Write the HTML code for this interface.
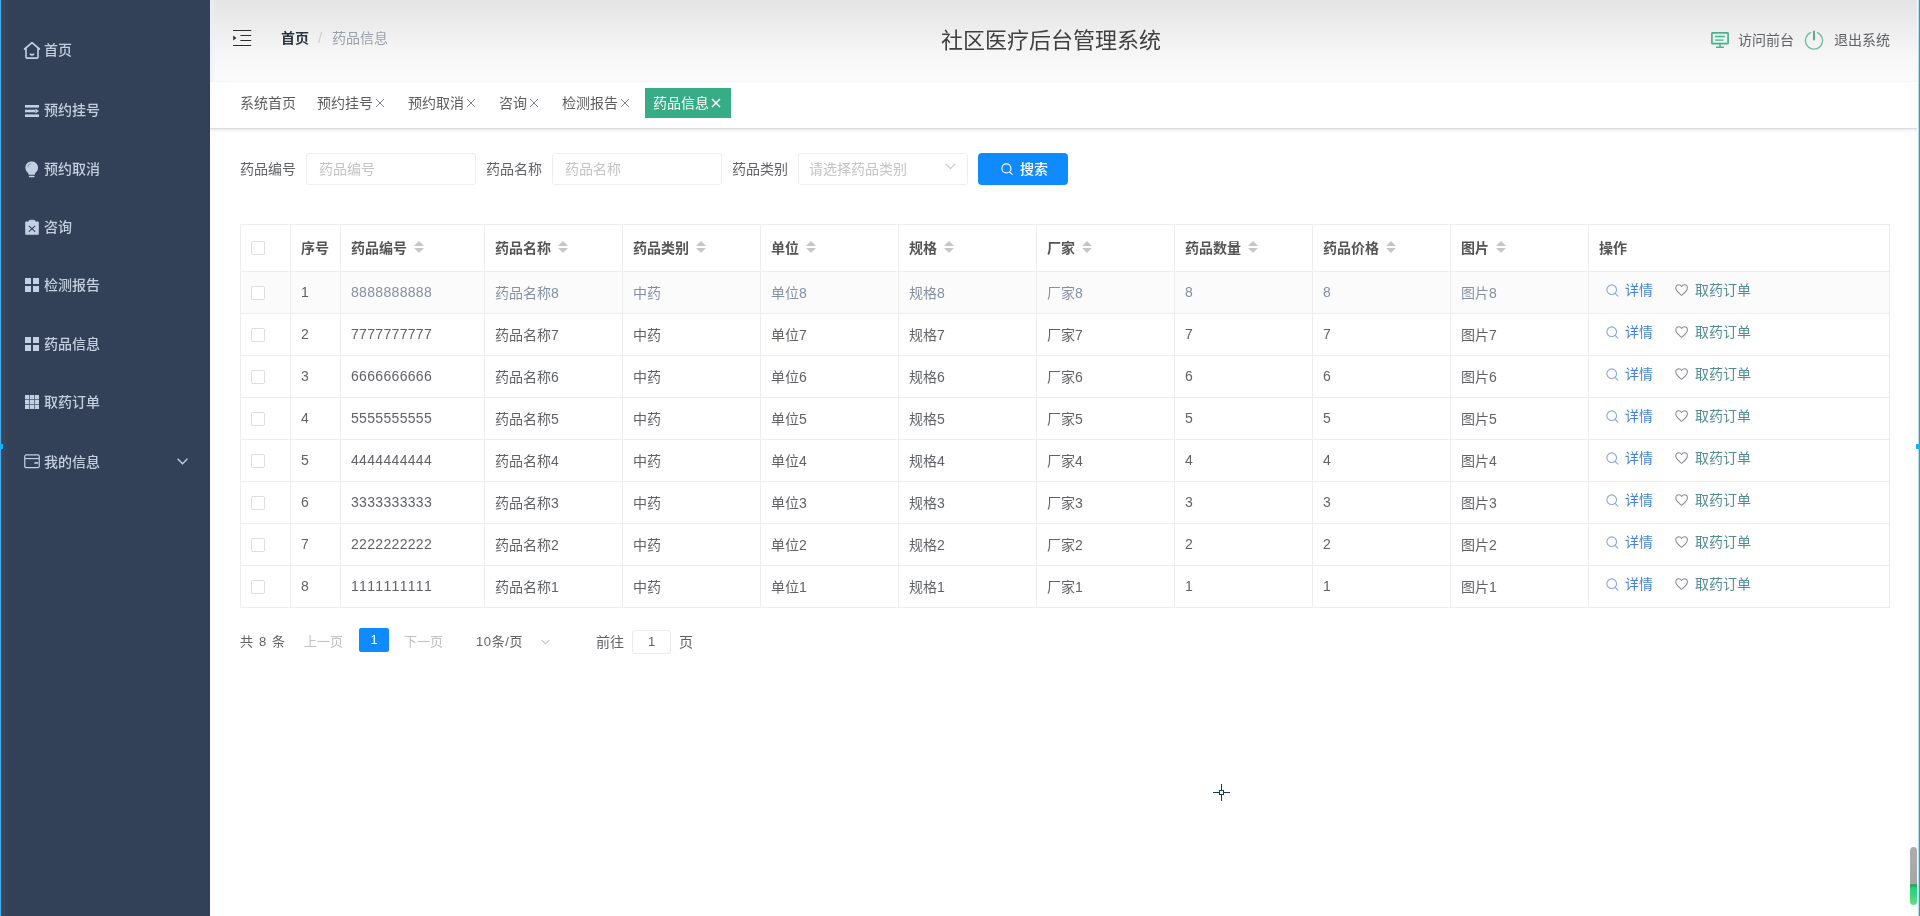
<!DOCTYPE html>
<html lang="zh-CN">
<head>
<meta charset="utf-8">
<title>社区医疗后台管理系统</title>
<style>
*{box-sizing:border-box;margin:0;padding:0}
html,body{width:1920px;height:916px;overflow:hidden;background:#fff}
body{position:relative;will-change:transform;font-family:"Liberation Sans","Noto Sans CJK SC",sans-serif;font-size:14px;color:#606266;-webkit-font-smoothing:antialiased}
.abs{position:absolute}
svg{display:block;overflow:visible}
/* ---- sidebar ---- */
.side{position:absolute;left:0;top:0;width:210px;height:916px;background:#334158}
.side .edge{position:absolute;left:0;top:0;width:2px;height:916px;background:linear-gradient(90deg,#4aa6e4 0,#4aa6e4 1px,#0f5c9c 1px,#0f5c9c 2px)}
.side .edge2{position:absolute;left:2px;top:0;width:7px;height:916px;background:linear-gradient(90deg,#38485b,#334158)}
.side .nub{position:absolute;left:0;top:444px;width:3px;height:5px;background:#1cb0f6}
.mi{position:absolute;left:0;width:210px;height:20px;line-height:20px;color:#c3cfde;font-size:14px;font-weight:500;white-space:nowrap}
.mi .t{position:absolute;left:44px;top:0}
.mi svg{position:absolute}
/* ---- header ---- */
.head{position:absolute;left:210px;top:0;width:1710px;height:82px;background:linear-gradient(180deg,#e4e4e4 0%,#ececec 30%,#f6f6f6 65%,#fbfbfb 100%)}
.bc{position:absolute;top:28px;height:20px;line-height:20px;font-size:14px;white-space:nowrap}
.title{position:absolute;left:731px;top:25px;width:220px;height:32px;line-height:32px;font-size:22px;color:#404040;white-space:nowrap;text-align:center}
.hr{position:absolute;top:30px;height:20px;line-height:20px;font-size:14px;color:#606266;white-space:nowrap}
/* ---- tabs ---- */
.tabs{position:absolute;left:210px;top:82px;width:1710px;height:47px;background:#fff;border-bottom:1px solid #dcdcdc;box-shadow:0 1px 3px 0 rgba(0,0,0,.12)}
.tab{position:absolute;top:11px;height:20px;line-height:20px;font-size:14px;color:#5c5c5c;white-space:nowrap}
.tab .x{position:absolute;top:5px}
.tab.on{top:6px;height:30px;line-height:30px;background:#37ad85;color:#fff}
/* ---- form ---- */
.lbl{position:absolute;top:159px;height:20px;line-height:20px;font-size:14px;color:#606266;white-space:nowrap}
.inp{position:absolute;top:153px;height:32px;width:170px;border:1px solid #eeeeee;border-radius:3px;background:#fff;font-size:14px;color:#c4c4c4;line-height:30px;padding-left:12px;white-space:nowrap}
.btn{position:absolute;left:978px;top:153px;width:90px;height:32px;border-radius:4px;background:#108bff;color:#fff;font-size:14px;font-weight:500;line-height:32px;white-space:nowrap}
/* ---- table ---- */
.tbl{position:absolute;left:240px;top:224px;width:1650px;border-collapse:separate;border-spacing:0;table-layout:fixed;border-top:1px solid #ededed;border-left:1px solid #ededed;font-size:14px;color:#606266}
.tbl th,.tbl td{border-right:1px solid #ededed;border-bottom:1px solid #ededed;padding:0 0 0 10px;text-align:left;white-space:nowrap;overflow:hidden;vertical-align:middle;position:relative}
.tbl th{height:47px;font-weight:bold;color:#555;padding-bottom:2px}
.tbl td{height:42px;font-weight:normal;padding-bottom:2px}
.tbl td .cb{position:relative;top:1px}
.tbl tr.hov td{background:#fbfbfb;color:#8590a3}
.tbl tr.hov td.n{color:#606266}
.cb{display:block;width:14px;height:14px;border:1px solid #dedede;border-radius:2px;background:#fff;margin-left:0}
.tbl th .cb{position:relative;top:1px}
.sort{display:inline-block;position:relative;width:10px;height:12px;margin-left:7px;vertical-align:0px}
.sort:before,.sort:after{content:"";position:absolute;left:0;border:5px solid transparent}
.sort:before{top:-5px;border-bottom-color:#c5c6c9}
.sort:after{top:7px;border-top-color:#c5c6c9}
.num{letter-spacing:.32px;font-kerning:none;font-variant-numeric:tabular-nums}
.act{position:absolute;top:8px;height:20px;line-height:20px;font-size:14px;white-space:nowrap}
.a1{left:36px;color:#4583d6}
.a2{left:106px;color:#528d94}
.act svg{position:absolute}
/* ---- pagination ---- */
.pg{position:absolute;top:632px;height:20px;line-height:20px;font-size:13px;color:#606266;white-space:nowrap}
.pgb{position:absolute;left:359px;top:628px;width:30px;height:24px;border-radius:2px;background:#108bff;color:#fff;font-size:13px;font-weight:normal;line-height:24px;text-align:center}
.pgi{position:absolute;left:632px;top:630px;width:39px;height:24px;border:1px solid #ececec;border-radius:3px;font-size:13px;line-height:22px;text-align:center;color:#606266}
</style>
</head>
<body>
<div class="side"><div class="edge"></div><div class="edge2"></div><div class="nub"></div>
<div class="mi" style="top:40px"><svg style="left:23px;top:1px" width="18" height="19" viewBox="0 0 18 18" preserveAspectRatio="none" fill="none" stroke="#c3d0e4" stroke-width="1.6" stroke-linejoin="round" stroke-linecap="round"><path d="M1.6 7.6 L9 1.6 L16.4 7.6 M3 6.8 V15.2 Q3 16.2 4 16.2 H14 Q15 16.2 15 15.2 V6.8"/><path d="M7.4 12.6 Q9 13.6 10.6 12.6"/></svg><span class="t">首页</span></div>
<div class="mi" style="top:100px"><svg style="left:25px;top:5px" width="14" height="12" viewBox="0 0 14 12" fill="#c3d0e4"><rect x="0" y="0" width="14" height="2.6"/><rect x="0" y="4.7" width="10" height="2.6"/><path d="M10.4 3.6 L14 6 L10.4 8.4 Z"/><rect x="0" y="9.4" width="14" height="2.6"/></svg><span class="t">预约挂号</span></div>
<div class="mi" style="top:159px"><svg style="left:25px;top:1.6px" width="13.4" height="17.6" viewBox="0 0 14 18" preserveAspectRatio="none" fill="#c3d0e4"><path d="M7 0.5 C3.2 0.5 0.4 3.3 0.4 6.8 C0.4 9.2 1.7 10.6 2.8 11.8 C3.4 12.5 3.7 13.2 3.8 14 H10.2 C10.3 13.2 10.6 12.5 11.2 11.8 C12.3 10.6 13.6 9.2 13.6 6.8 C13.6 3.3 10.8 0.5 7 0.5 Z"/><rect x="4" y="15" width="6" height="1.7" rx=".8"/><path d="M3 6.4 C3 4.4 4.4 3 6.2 2.8" stroke="#334158" stroke-width=".9" fill="none" opacity=".55"/></svg><span class="t">预约取消</span></div>
<div class="mi" style="top:217px"><svg style="left:25px;top:3px" width="14" height="15.3" viewBox="0 0 14 17" preserveAspectRatio="none" fill="#c3d0e4"><rect x="0.2" y="1.8" width="13.6" height="14.6" rx=".8"/><rect x="4" y="0.3" width="6" height="2.6" rx="1" stroke="#c3d0e4" stroke-width="1"/><path d="M3.9 6.6 L10.1 12.9 M10.1 6.6 L3.9 12.9" stroke="#334158" stroke-width="1.1" fill="none"/></svg><span class="t">咨询</span></div>
<div class="mi" style="top:275px"><svg style="left:25px;top:3px" width="14" height="14" viewBox="0 0 14 14" fill="#c3d0e4"><rect x="0" y="0" width="6" height="6"/><rect x="8" y="0" width="6" height="6"/><rect x="0" y="8" width="6" height="6"/><rect x="8" y="8" width="6" height="6"/></svg><span class="t">检测报告</span></div>
<div class="mi" style="top:333.5px"><svg style="left:25px;top:3px" width="14" height="14" viewBox="0 0 14 14" fill="#c3d0e4"><rect x="0" y="0" width="6" height="6"/><rect x="8" y="0" width="6" height="6"/><rect x="0" y="8" width="6" height="6"/><rect x="8" y="8" width="6" height="6"/></svg><span class="t">药品信息</span></div>
<div class="mi" style="top:392px"><svg style="left:25px;top:3px" width="14" height="14" viewBox="0 0 14 14" fill="#c3d0e4"><rect x="0" y="0" width="14" height="14"/><path d="M4.5 0 V14 M9.5 0 V14 M0 4.5 H14 M0 9.5 H14" stroke="#334158" stroke-width=".8" opacity=".8"/></svg><span class="t">取药订单</span></div>
<div class="mi" style="top:451px"><svg style="left:24px;top:3px" width="16" height="14.6" viewBox="0 0 17 16" preserveAspectRatio="none" fill="none" stroke="#c3d0e4" stroke-width="1.3"><rect x=".8" y="1" width="15.4" height="14" rx="1.6"/><path d="M1 5 H16"/><path d="M11 9.8 H15" stroke-width="1.8"/></svg><span class="t" style="top:1px">我的信息</span><svg style="left:177px;top:7px" width="11" height="7" viewBox="0 0 11 7" fill="none" stroke="#c3d0e4" stroke-width="1.3"><path d="M.6 .8 L5.5 5.8 L10.4 .8"/></svg></div>
</div>
<div class="head">
<div class="abs" style="left:0;top:0;width:6px;height:82px;background:linear-gradient(90deg,rgba(236,240,250,.9),rgba(240,243,250,0))"></div>
<svg class="abs" style="left:23px;top:30px" width="19" height="16" viewBox="0 0 19 16"><path d="M0 .5 H18.2 M7.4 5.5 H18.2 M7.4 10.5 H18.2 M0 15.5 H18.2" stroke="#2e2e2e" stroke-width="1.1" fill="none"/><path d="M.2 5.4 L3.4 8 L.2 10.6 Z" fill="#2e2e2e"/></svg>
<span class="bc" style="left:71px;color:#2b3340;font-weight:bold">首页</span>
<span class="bc" style="left:108px;color:#cfcfcf;font-weight:normal;font-size:15px">/</span>
<span class="bc" style="left:122px;color:#9aa1ab">药品信息</span>
<div class="title">社区医疗后台管理系统</div>
<svg class="abs" style="left:1501px;top:32px" width="18" height="16.2" viewBox="0 0 20 18" fill="none" stroke="#4fae8e" stroke-width="1.9"><rect x="1" y="1" width="18" height="12" rx=".6" fill="#dff5ec"/><path d="M4.6 5 H15.4 M4.6 9 H13.6" stroke-width="1.5"/><path d="M10 13 V16.6 M5.6 17 H14.4" stroke-width="1.7"/></svg>
<span class="hr" style="left:1528px">访问前台</span>
<svg class="abs" style="left:1594px;top:30px" width="20" height="20" viewBox="0 0 20 20" fill="none" stroke="#74bfa5" stroke-width="1.3" stroke-linecap="round"><path d="M6.6 2.6 A8.6 8.6 0 1 0 13.4 2.6"/><path d="M10 1.4 V9.6" stroke="#4fa98a" stroke-width="1.9"/></svg>
<span class="hr" style="left:1624px">退出系统</span>
</div>
<div class="tabs">
<div class="tab" style="left:30px">系统首页</div>
<div class="tab" style="left:107px">预约挂号<svg class="x" style="left:58px" width="10" height="10" viewBox="0 0 10 10"><path d="M1 1 L9 9 M9 1 L1 9" stroke="#7d8590" stroke-width="1" fill="none"/></svg></div>
<div class="tab" style="left:198px">预约取消<svg class="x" style="left:58px" width="10" height="10" viewBox="0 0 10 10"><path d="M1 1 L9 9 M9 1 L1 9" stroke="#7d8590" stroke-width="1" fill="none"/></svg></div>
<div class="tab" style="left:289px">咨询<svg class="x" style="left:30px" width="10" height="10" viewBox="0 0 10 10"><path d="M1 1 L9 9 M9 1 L1 9" stroke="#7d8590" stroke-width="1" fill="none"/></svg></div>
<div class="tab" style="left:352px">检测报告<svg class="x" style="left:58px" width="10" height="10" viewBox="0 0 10 10"><path d="M1 1 L9 9 M9 1 L1 9" stroke="#7d8590" stroke-width="1" fill="none"/></svg></div>
<div class="tab on" style="left:435px;width:86px;padding-left:8px">药品信息<svg class="x"  style="top:10px;left:66px" width="10" height="10" viewBox="0 0 10 10"><path d="M1 1 L9 9 M9 1 L1 9" stroke="#fff" stroke-width="1.5" fill="none"/></svg></div>
</div>
<span class="lbl" style="left:240px">药品编号</span><div class="inp" style="left:306px">药品编号</div>
<span class="lbl" style="left:486px">药品名称</span><div class="inp" style="left:552px">药品名称</div>
<span class="lbl" style="left:732px">药品类别</span><div class="inp" style="left:798px;padding-left:10px">请选择药品类别<svg class="abs" style="left:146px;top:9px" width="11" height="7" viewBox="0 0 11 7" fill="none" stroke="#c0c4cc" stroke-width="1.1"><path d="M.6 .8 L5.5 5.6 L10.4 .8"/></svg></div>
<div class="btn"><svg class="abs" style="left:23px;top:10px" width="12.2" height="12.2" viewBox="0 0 14 14" fill="none" stroke="#fff" stroke-width="1.3" stroke-linecap="round"><circle cx="6.2" cy="6.2" r="5.2"/><path d="M10.2 10.4 L12.8 13"/></svg><span class="abs" style="left:42px;top:0">搜索</span></div>
<table class="tbl"><colgroup>
<col style="width:50px">
<col style="width:50px">
<col style="width:144px">
<col style="width:138px">
<col style="width:138px">
<col style="width:138px">
<col style="width:138px">
<col style="width:138px">
<col style="width:138px">
<col style="width:138px">
<col style="width:138px">
<col style="width:301px">
</colgroup><thead><tr>
<th><span class="cb"></span></th>
<th>序号</th>
<th>药品编号<span class="sort"></span></th>
<th>药品名称<span class="sort"></span></th>
<th>药品类别<span class="sort"></span></th>
<th>单位<span class="sort"></span></th>
<th>规格<span class="sort"></span></th>
<th>厂家<span class="sort"></span></th>
<th>药品数量<span class="sort"></span></th>
<th>药品价格<span class="sort"></span></th>
<th>图片<span class="sort"></span></th>
<th>操作</th>
</tr></thead><tbody>
<tr class="hov"><td><span class="cb"></span></td><td class="n"><span class="num">1</span></td><td><span class="num">8888888888</span></td><td>药品名称<span class="num">8</span></td><td>中药</td><td>单位<span class="num">8</span></td><td>规格<span class="num">8</span></td><td>厂家<span class="num">8</span></td><td><span class="num">8</span></td><td><span class="num">8</span></td><td>图片<span class="num">8</span></td><td><span class="act a1"><svg style="left:-19.5px;top:3.5px" width="12.8" height="12.8" viewBox="0 0 13 13" fill="none" stroke="#8aa4e8" stroke-width="1.1" stroke-linecap="round"><circle cx="5.8" cy="5.8" r="4.9"/><path d="M9.5 9.7 L12 12.2"/></svg>详情</span><span class="act a2"><svg style="left:-20px;top:3.5px" width="13.2" height="12.2" viewBox="0 0 14 13" fill="none" stroke="#858a91" stroke-width="1.1" stroke-linejoin="round"><path d="M7 12 C4.5 10 .8 7.6 .8 4.3 C.8 2.3 2.3 .9 4 .9 C5.3 .9 6.4 1.6 7 2.8 C7.6 1.6 8.7 .9 10 .9 C11.7 .9 13.2 2.3 13.2 4.3 C13.2 7.6 9.5 10 7 12 Z"/></svg>取药订单</span></td></tr>
<tr><td><span class="cb"></span></td><td class="n"><span class="num">2</span></td><td><span class="num">7777777777</span></td><td>药品名称<span class="num">7</span></td><td>中药</td><td>单位<span class="num">7</span></td><td>规格<span class="num">7</span></td><td>厂家<span class="num">7</span></td><td><span class="num">7</span></td><td><span class="num">7</span></td><td>图片<span class="num">7</span></td><td><span class="act a1"><svg style="left:-19.5px;top:3.5px" width="12.8" height="12.8" viewBox="0 0 13 13" fill="none" stroke="#8aa4e8" stroke-width="1.1" stroke-linecap="round"><circle cx="5.8" cy="5.8" r="4.9"/><path d="M9.5 9.7 L12 12.2"/></svg>详情</span><span class="act a2"><svg style="left:-20px;top:3.5px" width="13.2" height="12.2" viewBox="0 0 14 13" fill="none" stroke="#858a91" stroke-width="1.1" stroke-linejoin="round"><path d="M7 12 C4.5 10 .8 7.6 .8 4.3 C.8 2.3 2.3 .9 4 .9 C5.3 .9 6.4 1.6 7 2.8 C7.6 1.6 8.7 .9 10 .9 C11.7 .9 13.2 2.3 13.2 4.3 C13.2 7.6 9.5 10 7 12 Z"/></svg>取药订单</span></td></tr>
<tr><td><span class="cb"></span></td><td class="n"><span class="num">3</span></td><td><span class="num">6666666666</span></td><td>药品名称<span class="num">6</span></td><td>中药</td><td>单位<span class="num">6</span></td><td>规格<span class="num">6</span></td><td>厂家<span class="num">6</span></td><td><span class="num">6</span></td><td><span class="num">6</span></td><td>图片<span class="num">6</span></td><td><span class="act a1"><svg style="left:-19.5px;top:3.5px" width="12.8" height="12.8" viewBox="0 0 13 13" fill="none" stroke="#8aa4e8" stroke-width="1.1" stroke-linecap="round"><circle cx="5.8" cy="5.8" r="4.9"/><path d="M9.5 9.7 L12 12.2"/></svg>详情</span><span class="act a2"><svg style="left:-20px;top:3.5px" width="13.2" height="12.2" viewBox="0 0 14 13" fill="none" stroke="#858a91" stroke-width="1.1" stroke-linejoin="round"><path d="M7 12 C4.5 10 .8 7.6 .8 4.3 C.8 2.3 2.3 .9 4 .9 C5.3 .9 6.4 1.6 7 2.8 C7.6 1.6 8.7 .9 10 .9 C11.7 .9 13.2 2.3 13.2 4.3 C13.2 7.6 9.5 10 7 12 Z"/></svg>取药订单</span></td></tr>
<tr><td><span class="cb"></span></td><td class="n"><span class="num">4</span></td><td><span class="num">5555555555</span></td><td>药品名称<span class="num">5</span></td><td>中药</td><td>单位<span class="num">5</span></td><td>规格<span class="num">5</span></td><td>厂家<span class="num">5</span></td><td><span class="num">5</span></td><td><span class="num">5</span></td><td>图片<span class="num">5</span></td><td><span class="act a1"><svg style="left:-19.5px;top:3.5px" width="12.8" height="12.8" viewBox="0 0 13 13" fill="none" stroke="#8aa4e8" stroke-width="1.1" stroke-linecap="round"><circle cx="5.8" cy="5.8" r="4.9"/><path d="M9.5 9.7 L12 12.2"/></svg>详情</span><span class="act a2"><svg style="left:-20px;top:3.5px" width="13.2" height="12.2" viewBox="0 0 14 13" fill="none" stroke="#858a91" stroke-width="1.1" stroke-linejoin="round"><path d="M7 12 C4.5 10 .8 7.6 .8 4.3 C.8 2.3 2.3 .9 4 .9 C5.3 .9 6.4 1.6 7 2.8 C7.6 1.6 8.7 .9 10 .9 C11.7 .9 13.2 2.3 13.2 4.3 C13.2 7.6 9.5 10 7 12 Z"/></svg>取药订单</span></td></tr>
<tr><td><span class="cb"></span></td><td class="n"><span class="num">5</span></td><td><span class="num">4444444444</span></td><td>药品名称<span class="num">4</span></td><td>中药</td><td>单位<span class="num">4</span></td><td>规格<span class="num">4</span></td><td>厂家<span class="num">4</span></td><td><span class="num">4</span></td><td><span class="num">4</span></td><td>图片<span class="num">4</span></td><td><span class="act a1"><svg style="left:-19.5px;top:3.5px" width="12.8" height="12.8" viewBox="0 0 13 13" fill="none" stroke="#8aa4e8" stroke-width="1.1" stroke-linecap="round"><circle cx="5.8" cy="5.8" r="4.9"/><path d="M9.5 9.7 L12 12.2"/></svg>详情</span><span class="act a2"><svg style="left:-20px;top:3.5px" width="13.2" height="12.2" viewBox="0 0 14 13" fill="none" stroke="#858a91" stroke-width="1.1" stroke-linejoin="round"><path d="M7 12 C4.5 10 .8 7.6 .8 4.3 C.8 2.3 2.3 .9 4 .9 C5.3 .9 6.4 1.6 7 2.8 C7.6 1.6 8.7 .9 10 .9 C11.7 .9 13.2 2.3 13.2 4.3 C13.2 7.6 9.5 10 7 12 Z"/></svg>取药订单</span></td></tr>
<tr><td><span class="cb"></span></td><td class="n"><span class="num">6</span></td><td><span class="num">3333333333</span></td><td>药品名称<span class="num">3</span></td><td>中药</td><td>单位<span class="num">3</span></td><td>规格<span class="num">3</span></td><td>厂家<span class="num">3</span></td><td><span class="num">3</span></td><td><span class="num">3</span></td><td>图片<span class="num">3</span></td><td><span class="act a1"><svg style="left:-19.5px;top:3.5px" width="12.8" height="12.8" viewBox="0 0 13 13" fill="none" stroke="#8aa4e8" stroke-width="1.1" stroke-linecap="round"><circle cx="5.8" cy="5.8" r="4.9"/><path d="M9.5 9.7 L12 12.2"/></svg>详情</span><span class="act a2"><svg style="left:-20px;top:3.5px" width="13.2" height="12.2" viewBox="0 0 14 13" fill="none" stroke="#858a91" stroke-width="1.1" stroke-linejoin="round"><path d="M7 12 C4.5 10 .8 7.6 .8 4.3 C.8 2.3 2.3 .9 4 .9 C5.3 .9 6.4 1.6 7 2.8 C7.6 1.6 8.7 .9 10 .9 C11.7 .9 13.2 2.3 13.2 4.3 C13.2 7.6 9.5 10 7 12 Z"/></svg>取药订单</span></td></tr>
<tr><td><span class="cb"></span></td><td class="n"><span class="num">7</span></td><td><span class="num">2222222222</span></td><td>药品名称<span class="num">2</span></td><td>中药</td><td>单位<span class="num">2</span></td><td>规格<span class="num">2</span></td><td>厂家<span class="num">2</span></td><td><span class="num">2</span></td><td><span class="num">2</span></td><td>图片<span class="num">2</span></td><td><span class="act a1"><svg style="left:-19.5px;top:3.5px" width="12.8" height="12.8" viewBox="0 0 13 13" fill="none" stroke="#8aa4e8" stroke-width="1.1" stroke-linecap="round"><circle cx="5.8" cy="5.8" r="4.9"/><path d="M9.5 9.7 L12 12.2"/></svg>详情</span><span class="act a2"><svg style="left:-20px;top:3.5px" width="13.2" height="12.2" viewBox="0 0 14 13" fill="none" stroke="#858a91" stroke-width="1.1" stroke-linejoin="round"><path d="M7 12 C4.5 10 .8 7.6 .8 4.3 C.8 2.3 2.3 .9 4 .9 C5.3 .9 6.4 1.6 7 2.8 C7.6 1.6 8.7 .9 10 .9 C11.7 .9 13.2 2.3 13.2 4.3 C13.2 7.6 9.5 10 7 12 Z"/></svg>取药订单</span></td></tr>
<tr><td><span class="cb"></span></td><td class="n"><span class="num">8</span></td><td><span class="num">1111111111</span></td><td>药品名称<span class="num">1</span></td><td>中药</td><td>单位<span class="num">1</span></td><td>规格<span class="num">1</span></td><td>厂家<span class="num">1</span></td><td><span class="num">1</span></td><td><span class="num">1</span></td><td>图片<span class="num">1</span></td><td><span class="act a1"><svg style="left:-19.5px;top:3.5px" width="12.8" height="12.8" viewBox="0 0 13 13" fill="none" stroke="#8aa4e8" stroke-width="1.1" stroke-linecap="round"><circle cx="5.8" cy="5.8" r="4.9"/><path d="M9.5 9.7 L12 12.2"/></svg>详情</span><span class="act a2"><svg style="left:-20px;top:3.5px" width="13.2" height="12.2" viewBox="0 0 14 13" fill="none" stroke="#858a91" stroke-width="1.1" stroke-linejoin="round"><path d="M7 12 C4.5 10 .8 7.6 .8 4.3 C.8 2.3 2.3 .9 4 .9 C5.3 .9 6.4 1.6 7 2.8 C7.6 1.6 8.7 .9 10 .9 C11.7 .9 13.2 2.3 13.2 4.3 C13.2 7.6 9.5 10 7 12 Z"/></svg>取药订单</span></td></tr>
</tbody></table>
<span class="pg" style="left:240px;word-spacing:2.3px">共 8 条</span>
<span class="pg" style="left:304px;color:#bfc1c6">上一页</span>
<div class="pgb">1</div>
<span class="pg" style="left:404px;color:#bfc1c6">下一页</span>
<span class="pg" style="left:476px;letter-spacing:.6px">10条/页</span>
<svg class="abs" style="left:541px;top:639px" width="9" height="6" viewBox="0 0 9 6" fill="none" stroke="#c0c4cc" stroke-width="1.1"><path d="M.6 .8 L4.5 4.8 L8.4 .8"/></svg>
<span class="pg" style="left:596px;font-size:14px">前往</span>
<div class="pgi">1</div>
<span class="pg" style="left:679px;font-size:14px">页</span>
<div class="abs" style="left:1221px;top:784px;width:1px;height:17px;background:#0f3d55"></div><div class="abs" style="left:1213px;top:792px;width:17px;height:1px;background:#0f3d55"></div><div class="abs" style="left:1219px;top:790px;width:5px;height:5px;border:1px solid #0f3d55;background:#fff"></div>
<div class="abs" style="left:1917px;top:0;width:3px;height:916px;background:linear-gradient(90deg,#f2fbfe 0,#f2fbfe 1px,#b4e2f4 1px,#b4e2f4 2px,#2d9bd0 2px)"></div>
<div class="abs" style="left:1916px;top:444px;width:4px;height:5px;background:#1cb0f6"></div>
<div class="abs" style="left:1910px;top:847px;width:7px;height:58px;border-radius:4px;background:linear-gradient(180deg,#adadad 0%,#a6a6a6 63%,#27ae60 64%,#27ae60 69%,#2ecc71 70%,#3ad47a 82%,#5fe584 100%)"></div>
</body>
</html>
